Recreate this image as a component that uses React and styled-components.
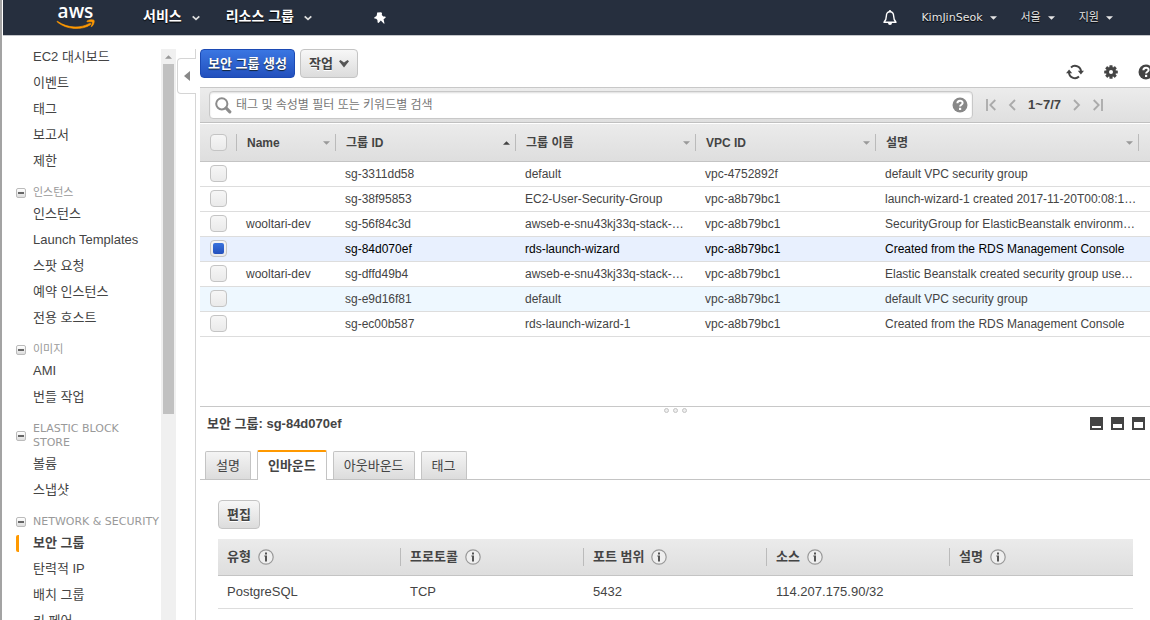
import React, { useState } from "react";
import styled, { createGlobalStyle, css } from "styled-components";

const sans = '"Liberation Sans", "Noto Sans CJK KR", sans-serif';
const wide = '"DejaVu Sans", "Noto Sans CJK KR", sans-serif';

const Global = createGlobalStyle`
  *, *::before, *::after { box-sizing: border-box; }
  html, body { margin: 0; height: 100%; }
  body { background: #fff; color: #444; font: 13px/26px ${sans}; overflow: hidden; }
  button, input { font: inherit; color: inherit; margin: 0; }
  a { color: inherit; text-decoration: none; }
  svg { display: block; flex: none; }
`;

const Page = styled.div`
  height: 100vh;
  display: flex;
  flex-direction: column;
  border-left: 2px solid #a3a3a3;
  overflow: hidden;
`;

const TopBar = styled.header`
  flex: none;
  display: flex;
  align-items: center;
  height: 36px;
  margin-left: 1px;
  padding: 0 37px 0 53px;
  background: #262f3e;
  border-bottom: 1px solid #c4c6ca;
  color: #fff;
`;

const Logo = styled.a`
  width: 40px;
  height: 28px;
`;

const MenuButton = styled.button`
  display: flex;
  align-items: center;
  gap: 10px;
  padding: 0;
  border: 0;
  background: none;
  font-size: 14px;
  font-weight: 700;
  line-height: 20px;
  text-shadow: 0 1px 1px #000;
  svg { margin-top: 4px; }
`;

const MainMenus = styled.nav`
  display: flex;
  align-items: center;
  gap: 26px;
  margin-left: 47px;
  padding-bottom: 3px;
`;

const PinButton = styled.button`
  margin-left: 62px;
  padding: 0;
  border: 0;
  background: none;
`;

const AccountMenus = styled.div`
  display: flex;
  align-items: center;
  gap: 24px;
  margin-left: auto;
`;

const AccountButton = styled.button`
  display: flex;
  align-items: center;
  gap: 7px;
  padding: 0;
  border: 0;
  background: none;
  font: 11px/20px ${wide};
  color: #e6e6e6;
  text-shadow: 0 1px 1px #000;
`;

const Body = styled.div`
  flex: 1;
  min-height: 0;
  display: flex;
`;

const Sidebar = styled.nav`
  flex: none;
  width: 159px;
  padding-top: 8px;
  overflow: hidden;
`;

const NavHeading = styled.h2`
  display: flex;
  align-items: center;
  gap: 7px;
  margin: 0;
  padding: 12px 0 1px 14px;
  font: 11px/14px ${wide};
  color: #999;
  white-space: pre-line;
`;

const Toggle = styled.button`
  flex: none;
  display: grid;
  place-items: center;
  width: 10px;
  height: 10px;
  padding: 0;
  border: 1px solid #bbb;
  border-radius: 2px;
  background: linear-gradient(#fff, #ddd);
  &::after { content: ""; width: 6px; height: 2px; background: #666; }
`;

const NavList = styled.ul`
  margin: 0;
  padding: 0;
  list-style: none;
`;

const NavLink = styled.a`
  display: flex;
  align-items: center;
  height: 26px;
  padding-left: 31px;
  white-space: nowrap;
  ${(p) => p.$active && css`
    font-weight: 700;
    padding-left: 14px;
    &::before {
      content: "";
      width: 3px;
      height: 17px;
      margin-right: 14px;
      border-radius: 2px 0 0 2px;
      background: #f90;
    }
  `}
`;

const ScrollTrack = styled.div`
  flex: none;
  width: 15px;
  margin-top: 13px;
  padding: 0 2px;
  background: #f0f0f0;
`;

const ScrollArrow = styled.div`
  height: 15px;
  display: grid;
  place-items: center;
`;

const ScrollThumb = styled.div`
  height: 350px;
  background: #c1c1c1;
`;

const Gutter = styled.div`
  flex: none;
  display: flex;
  flex-direction: column;
  width: 20px;
  padding-top: 13px;
  &::before { content: ""; height: 9px; border-right: 1px solid #d5d5d5; }
  &::after { content: ""; flex: 1; border-right: 1px solid #d5d5d5; }
`;

const Collapse = styled.button`
  height: 36px;
  margin-left: 1px;
  padding: 0 0 0 6px;
  border: 1px solid #d5d5d5;
  border-right: 0;
  border-radius: 4px 0 0 4px;
  background: #fff;
`;

const Main = styled.main`
  flex: 1;
  min-width: 0;
  display: flex;
  flex-direction: column;
  margin-left: 4px;
`;

const Actions = styled.div`
  flex: none;
  display: flex;
  gap: 5px;
  height: 51px;
  padding-top: 13px;
`;

const Button = styled.button`
  display: flex;
  align-items: center;
  gap: 6px;
  height: 29px;
  padding: 0 8px;
  border: 1px solid #c4c4c4;
  border-radius: 4px;
  background: linear-gradient(#f7f7f7, #dcdcdc);
  font-weight: 700;
  text-shadow: 0 1px 0 #fff;
  ${(p) => p.$primary && css`
    padding: 0 7px;
    border-color: #1c4ab4;
    background: linear-gradient(#3a76e2, #2350bd);
    color: #fff;
    text-shadow: 0 1px 1px #123;
  `}
`;

const IconButtons = styled.div`
  align-self: flex-start;
  display: flex;
  align-items: center;
  gap: 20px;
  margin: 15px -4px 0 auto;
`;

const IconButton = styled.button`
  flex: none;
  padding: 0;
  border: 0;
  background: none;
`;

const FilterBar = styled.div`
  flex: none;
  display: flex;
  align-items: center;
  height: 36px;
  padding: 0 47px 0 9px;
  border-top: 1px solid #c8c8c8;
  border-bottom: 1px solid #c0c0c0;
  background: linear-gradient(#ececec, #dfdfdf);
`;

const SearchBox = styled.label`
  flex: 1;
  display: flex;
  align-items: center;
  gap: 4px;
  height: 28px;
  padding: 0 4px 0 5px;
  border: 1px solid #c8c8c8;
  border-radius: 4px;
  background: #fff;
  box-shadow: inset 0 1px 2px #ddd;
`;

const SearchInput = styled.input`
  flex: 1;
  min-width: 0;
  height: 24px;
  padding: 0;
  border: 0;
  outline: 0;
  background: none;
  font-size: 12px;
  &::placeholder { color: #777; opacity: 1; }
`;

const Pager = styled.div`
  display: flex;
  align-items: center;
  gap: 12px;
  margin-left: 13px;
  font-size: 13px;
  font-weight: 700;
  white-space: nowrap;
`;

const GroupTable = styled.table`
  flex: none;
  width: 100%;
  margin-top: 1px;
  border-collapse: separate;
  border-spacing: 0;
  table-layout: fixed;
  font-size: 12px;
  line-height: 24px;
`;

const GroupHead = styled.th`
  height: 38px;
  padding: 10px 0 0;
  border-bottom: 1px solid #c4c4c4;
  background: linear-gradient(#ebebeb, #dedede);
  text-align: left;
  vertical-align: top;
`;

const HeadInner = styled.div`
  display: flex;
  align-items: center;
  justify-content: space-between;
  height: 17px;
  padding: 0 5px 0 10px;
  border-right: 1px solid #bbb;
  box-shadow: 1px 0 0 #fff;
  white-space: nowrap;
`;

const GroupRow = styled.tr`
  background: ${(p) => (p.$selected ? "#e8f0fe" : p.$hover ? "#eef8ff" : "#fff")};
  color: ${(p) => (p.$selected ? "#000" : "#444")};
`;

const GroupCell = styled.td`
  height: 25px;
  padding: 0 0 0 9px;
  border-bottom: 1px solid #ddd;
  overflow: hidden;
  text-overflow: ellipsis;
  white-space: nowrap;
`;

const CheckCell = styled(GroupCell)`
  padding: 3px 0 0 10px;
  vertical-align: top;
`;

const Check = styled.input`
  appearance: none;
  display: grid;
  place-items: center;
  width: 17px;
  height: 17px;
  border: 1px solid #c4c4c4;
  border-radius: 4px;
  background: linear-gradient(#f6f6f6, #eaeaea);
  &:checked::after {
    content: "";
    width: 11px;
    height: 11px;
    border-radius: 2px;
    background: linear-gradient(#3a73dc, #2350bd);
  }
`;

const Details = styled.section`
  flex: none;
  height: 214px;
  margin-top: auto;
  border-top: 1px solid #c8c8c8;
`;

const Grip = styled.div`
  display: flex;
  justify-content: center;
  gap: 4px;
  height: 6px;
  padding-top: 1px;
`;

const Dot = styled.span`
  width: 5px;
  height: 5px;
  border: 1px solid #c4c4c4;
  border-radius: 50%;
  background: #eee;
`;

const DetailsBar = styled.div`
  display: flex;
  align-items: center;
  justify-content: space-between;
  height: 22px;
  padding: 0 5px 0 7px;
`;

const DetailsTitle = styled.h1`
  margin: 0;
  font-size: 13px;
  line-height: 22px;
`;

const LayoutButtons = styled.div`
  display: flex;
  gap: 8px;
  padding-bottom: 2px;
`;

const Tabs = styled.div`
  display: flex;
  align-items: flex-end;
  gap: 6px;
  height: 45px;
  padding-left: 5px;
  border-bottom: 1px solid #c4c4c4;
`;

const Tab = styled.button`
  height: 28px;
  padding: 0 10px;
  border: 1px solid #c4c4c4;
  border-bottom: 0;
  border-radius: 2px 2px 0 0;
  background: linear-gradient(#f4f4f4, #dcdcdc);
  ${(p) => p.$active && css`
    height: 30px;
    margin-bottom: -1px;
    border-top: 2px solid #f90;
    background: #fff;
    font-weight: 700;
  `}
`;

const TabPanel = styled.div`
  padding: 20px 17px 0 18px;
`;

const RuleTable = styled.table`
  width: 100%;
  margin-top: 10px;
  border-collapse: separate;
  border-spacing: 0;
  table-layout: fixed;
`;

const RuleHead = styled.th`
  height: 37px;
  padding: 0;
  border-bottom: 1px solid #c4c4c4;
  background: linear-gradient(#ebebeb, #dedede);
  text-align: left;
`;

const RuleHeadInner = styled.div`
  display: flex;
  align-items: center;
  gap: 7px;
  height: 18px;
  padding-left: 9px;
  border-right: 1px solid ${(p) => (p.$last ? "transparent" : "#bbb")};
  box-shadow: ${(p) => (p.$last ? "none" : "1px 0 0 #fff")};
`;

const RuleCell = styled.td`
  height: 33px;
  padding: 0 9px;
  border-bottom: 1px solid #ddd;
`;

const Caret = ({ color = "#999", up, w = 7 }) => (
  <svg width={w} height="4" viewBox="0 0 8 4" aria-hidden="true">
    <path d={up ? "M0 4h8L4 0z" : "M0 0h8L4 4z"} fill={color} />
  </svg>
);

const Chevron = ({ color = "#ddd" }) => (
  <svg width="8" height="6" viewBox="0 0 8 6" aria-hidden="true">
    <path d="M.7 1.300L4 4.300l3.300-3" fill="none" stroke={color} strokeWidth="1.800" />
  </svg>
);

const ActionChevron = () => (
  <svg width="10" height="8" viewBox="0 0 10 8" aria-hidden="true">
    <path d="M0 1.200L1.500 0 5 2.600 8.500 0 10 1.200 5 7.500z" fill="#555" />
  </svg>
);

const AwsLogo = () => (
  <svg width="40" height="28" viewBox="0 0 40 28" overflow="visible" aria-hidden="true">
    <text x="19.500" y="13.500" textAnchor="middle" fill="#fff" fontFamily="Open Sans, Noto Sans, sans-serif" fontSize="19" fontWeight="600">aws</text>
    <g fill="#f90" stroke="#f90" strokeWidth=".6">
      <path d="M1.500 17.300c10 7 23 7.300 32 2.100 1.300-.6 2 .4 1 1.300C26 26.500 10.500 25.800 1.200 18c-.4-.4-.1-.9.3-.7z" />
      <path d="M31 17c2-1.500 6-1.700 7-.8.8 1-.3 4.700-2.200 6.400-.4.300-.8.100-.6-.3.500-1.100 1.500-3.500 1-4.200-.5-.6-3.100-.4-4.600-.3-.6 0-1-.4-.6-.8z" />
    </g>
  </svg>
);

const Pin = () => (
  <svg width="12" height="12" viewBox="0 0 12 12" aria-hidden="true">
    <path d="M3.200.5L7.200.2l.8 1-.2 1.700 1.500 1.500 1.900.2.600 1-2.200 1.700.9 4.200-.5.3-3.200-3.200-2.200 2.300-1-.5-.2-2.300-1.200-1.300L.4 6.600l-.2-1 2.300-1.500.4-1.500z" fill="#fff" />
  </svg>
);

const Bell = () => (
  <svg width="14" height="16" viewBox="0 0 14 16" aria-hidden="true">
    <path d="M7 1.800c-2.500 0-3.600 1.700-3.600 3.900 0 3.600-.6 4.600-2.400 6.600h12c-1.800-2-2.400-3-2.400-6.600 0-2.200-1.100-3.900-3.600-3.900z" fill="none" stroke="#fff" strokeWidth="1.400" strokeLinejoin="round" />
    <path d="M5 13h4a2 2 0 0 1-4 0zM6.200 0h1.600v2H6.200z" fill="#fff" />
  </svg>
);

const Magnifier = () => (
  <svg width="17" height="17" viewBox="0 0 17 17" aria-hidden="true">
    <circle cx="6.800" cy="6.800" r="5.600" fill="none" stroke="#8c8c8c" strokeWidth="2" />
    <path d="M11.200 11.200l3.600 3.600" stroke="#8c8c8c" strokeWidth="3.200" strokeLinecap="round" />
  </svg>
);

const Help = ({ color }) => (
  <svg width="16" height="16" viewBox="0 0 16 16" aria-hidden="true">
    <circle cx="8" cy="8" r="7.500" fill={color} />
    <path d="M5.400 6.200c0-3.400 5.300-3.200 5.200-.2 0 1.800-2.500 1.700-2.500 3.600" fill="none" stroke="#fff" strokeWidth="2" />
    <path d="M7 10.800h2.200V13H7z" fill="#fff" />
  </svg>
);

const Refresh = () => (
  <svg width="18" height="16" viewBox="0 0 18 16" aria-hidden="true">
    <g fill="none" stroke="#444" strokeWidth="2">
      <path d="M5 3.400A6 6 0 0 1 15 8" />
      <path d="M13 12.600A6 6 0 0 1 3 8" />
    </g>
    <path d="M11.800 6.800h6.200l-3.100 3.600zM0 9.200h6.200L3.100 5.600z" fill="#444" />
  </svg>
);

const Gear = () => (
  <svg width="14" height="14" viewBox="-7 -7 14 14" aria-hidden="true">
    {[0, 45, 90, 135].map((a) => (
      <rect key={a} x="-1.600" y="-6.800" width="3.200" height="13.600" rx=".6" fill="#444" transform={`rotate(${a})`} />
    ))}
    <circle r="5" fill="#444" />
    <circle r="2" fill="#fff" />
  </svg>
);

const PagerIcon = ({ edge, next }) => {
  const w = edge ? 10 : 8;
  return (
    <svg width={w} height="12" viewBox={`0 0 ${w} 12`} aria-hidden="true">
      <g fill="none" stroke="#aaa" strokeWidth="1.800" transform={next ? `translate(${w} 0) scale(-1 1)` : undefined}>
        <path d={edge ? "M9.300 1L4.300 6l5 5" : "M7 1L2 6l5 5"} />
        {edge && <path d="M1 0v12" />}
      </g>
    </svg>
  );
};

const Info = () => (
  <svg width="16" height="16" viewBox="0 0 16 16" aria-hidden="true">
    <circle cx="8" cy="8" r="7.200" fill="#efefef" stroke="#999" strokeWidth="1.200" />
    <path d="M7 3.500h2v2H7zM6.300 6.500H9v6H7V7.500h-.7z" fill="#555" />
  </svg>
);

const LayoutIcon = ({ top }) => (
  <svg width="13" height="13" viewBox="0 0 13 13" aria-hidden="true">
    <path d="M0 0h13v13H0z" fill="#444" />
    <path d={`M2 ${top}h9v${11 - top}H2z`} fill="#fff" />
  </svg>
);

const sections = [
  { items: ["EC2 대시보드", "이벤트", "태그", "보고서", "제한"] },
  { title: "인스턴스", items: ["인스턴스", "Launch Templates", "스팟 요청", "예약 인스턴스", "전용 호스트"] },
  { title: "이미지", items: ["AMI", "번들 작업"] },
  { title: "ELASTIC BLOCK\nSTORE", items: ["볼륨", "스냅샷"] },
  { title: "NETWORK & SECURITY", items: ["보안 그룹", "탄력적 IP", "배치 그룹", "키 페어"] },
];

const columns = ["Name", "그룹 ID", "그룹 이름", "VPC ID", "설명"];

const groups = [
  ["", "sg-3311dd58", "default", "vpc-4752892f", "default VPC security group"],
  ["", "sg-38f95853", "EC2-User-Security-Group", "vpc-a8b79bc1", "launch-wizard-1 created 2017-11-20T00:08:1…"],
  ["wooltari-dev", "sg-56f84c3d", "awseb-e-snu43kj33q-stack-…", "vpc-a8b79bc1", "SecurityGroup for ElasticBeanstalk environm…"],
  ["", "sg-84d070ef", "rds-launch-wizard", "vpc-a8b79bc1", "Created from the RDS Management Console"],
  ["wooltari-dev", "sg-dffd49b4", "awseb-e-snu43kj33q-stack-…", "vpc-a8b79bc1", "Elastic Beanstalk created security group use…"],
  ["", "sg-e9d16f81", "default", "vpc-a8b79bc1", "default VPC security group"],
  ["", "sg-ec00b587", "rds-launch-wizard-1", "vpc-a8b79bc1", "Created from the RDS Management Console"],
];

const ruleColumns = ["유형", "프로토콜", "포트 범위", "소스", "설명"];
const rule = ["PostgreSQL", "TCP", "5432", "114.207.175.90/32", ""];
const tabs = ["설명", "인바운드", "아웃바운드", "태그"];

export default function App() {
  const [selected, setSelected] = useState("sg-84d070ef");
  const [tab, setTab] = useState("인바운드");

  return (
    <Page>
      <Global />
      <TopBar>
        <Logo href="#" aria-label="AWS"><AwsLogo /></Logo>
        <MainMenus>
          <MenuButton>서비스 <Chevron /></MenuButton>
          <MenuButton>리소스 그룹 <Chevron /></MenuButton>
        </MainMenus>
        <PinButton aria-label="Pin"><Pin /></PinButton>
        <AccountMenus>
          <IconButton aria-label="Notifications"><Bell /></IconButton>
          <AccountButton>KimJinSeok <Caret color="#e6e6e6" /></AccountButton>
          <AccountButton>서울 <Caret color="#e6e6e6" /></AccountButton>
          <AccountButton>지원 <Caret color="#e6e6e6" /></AccountButton>
        </AccountMenus>
      </TopBar>
      <Body>
        <Sidebar>
          {sections.map((s, i) => (
            <React.Fragment key={i}>
              {s.title && (
                <NavHeading><Toggle aria-label={`${s.title} toggle`} />{s.title}</NavHeading>
              )}
              <NavList>
                {s.items.map((t) => (
                  <li key={t}><NavLink href="#" $active={t === "보안 그룹"}>{t}</NavLink></li>
                ))}
              </NavList>
            </React.Fragment>
          ))}
        </Sidebar>
        <ScrollTrack>
          <ScrollArrow><Caret up color="#999" /></ScrollArrow>
          <ScrollThumb />
        </ScrollTrack>
        <Gutter>
          <Collapse aria-label="Collapse navigation">
            <svg width="6" height="10" viewBox="0 0 6 10" aria-hidden="true"><path d="M6 0v10L0 5z" fill="#888" /></svg>
          </Collapse>
        </Gutter>
        <Main>
          <Actions>
            <Button $primary>보안 그룹 생성</Button>
            <Button>작업 <ActionChevron /></Button>
            <IconButtons>
              <IconButton aria-label="Refresh"><Refresh /></IconButton>
              <IconButton aria-label="Settings"><Gear /></IconButton>
              <IconButton aria-label="Help"><Help color="#444" /></IconButton>
            </IconButtons>
          </Actions>
          <FilterBar>
            <SearchBox>
              <Magnifier />
              <SearchInput type="text" aria-label="검색" placeholder="태그 및 속성별 필터 또는 키워드별 검색" />
              <Help color="#888" />
            </SearchBox>
            <Pager>
              <IconButton aria-label="First page"><PagerIcon edge /></IconButton>
              <IconButton aria-label="Previous page"><PagerIcon /></IconButton>
              <span>1~7/7</span>
              <IconButton aria-label="Next page"><PagerIcon next /></IconButton>
              <IconButton aria-label="Last page"><PagerIcon edge next /></IconButton>
            </Pager>
          </FilterBar>
          <GroupTable>
            <colgroup>
              <col style={{ width: 37 }} />
              <col style={{ width: 99 }} />
              <col style={{ width: 180 }} />
              <col style={{ width: 180 }} />
              <col style={{ width: 180 }} />
              <col />
              <col style={{ width: 11 }} />
            </colgroup>
            <thead>
              <tr>
                <GroupHead>
                  <HeadInner><Check type="checkbox" aria-label="모두 선택" /></HeadInner>
                </GroupHead>
                {columns.map((c) => (
                  <GroupHead key={c}>
                    <HeadInner>{c} {c === "그룹 ID" ? <Caret up color="#444" /> : <Caret />}</HeadInner>
                  </GroupHead>
                ))}
                <GroupHead />
              </tr>
            </thead>
            <tbody>
              {groups.map((g) => (
                <GroupRow key={g[1]} $selected={g[1] === selected} $hover={g[1] === "sg-e9d16f81"}>
                  <CheckCell>
                    <Check
                      type="checkbox"
                      aria-label={g[1]}
                      checked={g[1] === selected}
                      onChange={() => setSelected(g[1])}
                    />
                  </CheckCell>
                  {g.map((v, i) => <GroupCell key={i}>{v}</GroupCell>)}
                  <GroupCell />
                </GroupRow>
              ))}
            </tbody>
          </GroupTable>
          <Details>
            <Grip><Dot /><Dot /><Dot /></Grip>
            <DetailsBar>
              <DetailsTitle>보안 그룹: {selected}</DetailsTitle>
              <LayoutButtons>
                <IconButton aria-label="Small panel"><LayoutIcon top={9} /></IconButton>
                <IconButton aria-label="Medium panel"><LayoutIcon top={7} /></IconButton>
                <IconButton aria-label="Large panel"><LayoutIcon top={5} /></IconButton>
              </LayoutButtons>
            </DetailsBar>
            <Tabs role="tablist">
              {tabs.map((t) => (
                <Tab key={t} role="tab" aria-selected={t === tab} $active={t === tab} onClick={() => setTab(t)}>{t}</Tab>
              ))}
            </Tabs>
            <TabPanel role="tabpanel">
              <Button>편집</Button>
              <RuleTable>
                <thead>
                  <tr>
                    {ruleColumns.map((c, i) => (
                      <RuleHead key={c}><RuleHeadInner $last={i === 4}>{c} <Info /></RuleHeadInner></RuleHead>
                    ))}
                  </tr>
                </thead>
                <tbody>
                  <tr>{rule.map((v, i) => <RuleCell key={i}>{v}</RuleCell>)}</tr>
                </tbody>
              </RuleTable>
            </TabPanel>
          </Details>
        </Main>
      </Body>
    </Page>
  );
}
